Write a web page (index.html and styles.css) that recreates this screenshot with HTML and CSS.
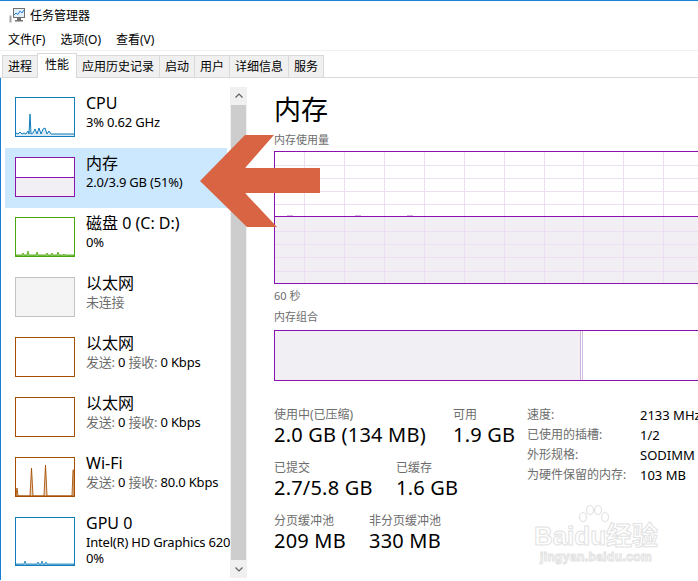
FILE: index.html
```html
<!DOCTYPE html>
<html lang="zh-CN">
<head>
    <meta charset="UTF-8">
    <meta name="viewport" content="width=device-width, initial-scale=1.0">
    <title>任务管理器</title>
    <link rel="stylesheet" href="styles.css">
</head>
<body>
<div class="window">
    <div class="titlebar">
        <svg class="app-icon" width="16" height="15" viewBox="0 0 16 15">
            <rect x="0.5" y="7.5" width="2" height="7" fill="#a0a0a0"/>
            <rect x="4.5" y="0.5" width="11" height="9" fill="#e3f1fb" stroke="#707070"/>
            <polyline points="5,7 7,5 9,6.5 11,3 13,5 15,2" fill="none" stroke="#2a7fd4"/>
            <rect x="8" y="10" width="4" height="2" fill="#707070"/>
            <rect x="6" y="12" width="8" height="1.5" fill="#707070"/>
        </svg>
        <span>任务管理器</span>
    </div>

    <div class="menubar">
        <span>文件(F)</span>
        <span>选项(O)</span>
        <span>查看(V)</span>
    </div>

    <div class="tabs">
        <div class="tab">进程</div>
        <div class="tab active">性能</div>
        <div class="tab">应用历史记录</div>
        <div class="tab">启动</div>
        <div class="tab">用户</div>
        <div class="tab">详细信息</div>
        <div class="tab">服务</div>
    </div>

    <div class="main">
        <div class="sidebar">
            <div class="list">
                <div class="item">
                    <div class="thumb cpu">
                        <svg width="58" height="38" viewBox="0 0 58 38">
                            <path d="M0 38 L0 35 L2 36 L4 34 L6 36 L8 35 L10 36 L12 33 L13 36 L14 16 L15 36 L17 35 L19 31 L21 36 L23 30 L25 36 L27 31 L29 30 L31 36 L33 33 L35 36 L58 36 L58 38 Z" fill="#d9eaf6"/>
                            <polyline points="0,35 2,36 4,34 6,36 8,35 10,36 12,33 13,36 14,16 15,36 17,35 19,31 21,36 23,30 25,36 27,31 29,30 31,36 33,33 35,36 58,36" fill="none" stroke="#117dbb"/>
                        </svg>
                    </div>
                    <div class="info">
                        <div class="name">CPU</div>
                        <div class="sub">3% 0.62 GHz</div>
                    </div>
                </div>

                <div class="item selected">
                    <div class="thumb mem">
                        <svg width="58" height="38" viewBox="0 0 58 38">
                            <rect x="0" y="19" width="58" height="19" fill="#f1eff4"/>
                            <line x1="0" y1="19.5" x2="58" y2="19.5" stroke="#8b12ae"/>
                        </svg>
                    </div>
                    <div class="info">
                        <div class="name">内存</div>
                        <div class="sub">2.0/3.9 GB (51%)</div>
                    </div>
                </div>

                <div class="item">
                    <div class="thumb disk">
                        <svg width="58" height="38" viewBox="0 0 58 38">
                            <path d="M0 38 L0 37 L6 37 L7 35 L8 37 L11 37 L12 33 L13 37 L20 37 L21 34 L22 37 L30 37 L31 35 L32 37 L35 37 L36 35 L37 37 L41 37 L42 34 L43 37 L47 37 L48 36 L49 37 L58 37 L58 38 Z" fill="#b7dc9c" stroke="#4da60c" stroke-width="0.8"/>
                        </svg>
                    </div>
                    <div class="info">
                        <div class="name">磁盘 0 (C: D:)</div>
                        <div class="sub">0%</div>
                    </div>
                </div>

                <div class="item">
                    <div class="thumb off"></div>
                    <div class="info">
                        <div class="name">以太网</div>
                        <div class="sub muted">未连接</div>
                    </div>
                </div>

                <div class="item">
                    <div class="thumb eth"></div>
                    <div class="info">
                        <div class="name">以太网</div>
                        <div class="sub"><span class="muted">发送:</span> 0 <span class="muted">接收:</span> 0 Kbps</div>
                    </div>
                </div>

                <div class="item">
                    <div class="thumb eth"></div>
                    <div class="info">
                        <div class="name">以太网</div>
                        <div class="sub"><span class="muted">发送:</span> 0 <span class="muted">接收:</span> 0 Kbps</div>
                    </div>
                </div>

                <div class="item">
                    <div class="thumb eth">
                        <svg width="58" height="38" viewBox="0 0 58 38">
                            <path d="M0 38 L1 30 L2 38 L14 38 L15.5 10 L17 38 L28 38 L29.5 7 L31 38 L56 38 L57 12 L58 12 L58 38 Z" fill="#ecd3bc" stroke="#a74f01" stroke-width="0.9"/>
                        </svg>
                    </div>
                    <div class="info">
                        <div class="name">Wi-Fi</div>
                        <div class="sub"><span class="muted">发送:</span> 0 <span class="muted">接收:</span> 80.0 Kbps</div>
                    </div>
                </div>

                <div class="item tall">
                    <div class="thumb gpu">
                        <svg width="58" height="47" viewBox="0 0 58 47">
                            <path d="M0 47 L0 46 L8 46 L9 43 L10 46 L21 46 L22 44 L23 46 L25 46 L26 43 L27 46 L29 46 L30 44 L31 46 L58 46 L58 47 Z" fill="#cfe4f2" stroke="#117dbb" stroke-width="0.8"/>
                        </svg>
                    </div>
                    <div class="info">
                        <div class="name">GPU 0</div>
                        <div class="sub">Intel(R) HD Graphics 620</div>
                        <div class="sub">0%</div>
                    </div>
                </div>
            </div>

            <div class="scrollbar">
                <div class="sb-btn">
                    <svg width="8" height="5" viewBox="0 0 8 5"><polyline points="0.5,4.5 4,1 7.5,4.5" fill="none" stroke="#606060" stroke-width="1.2"/></svg>
                </div>
                <div class="sb-thumb"></div>
                <div class="sb-btn">
                    <svg width="8" height="5" viewBox="0 0 8 5"><polyline points="0.5,0.5 4,4 7.5,0.5" fill="none" stroke="#606060" stroke-width="1.2"/></svg>
                </div>
            </div>
        </div>

        <div class="detail">
            <h1>内存</h1>
            <div class="caption cap-usage">内存使用量</div>
            <div class="chart">
                <svg width="438" height="131" viewBox="0 0 438 131">
                    <rect x="0" y="64" width="438" height="67" fill="#f1eff4"/>
                    <g stroke="#eddff2" stroke-width="1">
                        <line x1="0" y1="13.5" x2="438" y2="13.5"/>
                        <line x1="0" y1="26.5" x2="438" y2="26.5"/>
                        <line x1="0" y1="39.5" x2="438" y2="39.5"/>
                        <line x1="0" y1="52.5" x2="438" y2="52.5"/>
                        <line x1="0" y1="79.5" x2="438" y2="79.5"/>
                        <line x1="0" y1="92.5" x2="438" y2="92.5"/>
                        <line x1="0" y1="105.5" x2="438" y2="105.5"/>
                        <line x1="0" y1="119.5" x2="438" y2="119.5"/>
                        <line x1="29.5" y1="0" x2="29.5" y2="131"/>
                        <line x1="69.5" y1="0" x2="69.5" y2="131"/>
                        <line x1="109.5" y1="0" x2="109.5" y2="131"/>
                        <line x1="149.5" y1="0" x2="149.5" y2="131"/>
                        <line x1="189.5" y1="0" x2="189.5" y2="131"/>
                        <line x1="229.5" y1="0" x2="229.5" y2="131"/>
                        <line x1="269.5" y1="0" x2="269.5" y2="131"/>
                        <line x1="308.5" y1="0" x2="308.5" y2="131"/>
                        <line x1="348.5" y1="0" x2="348.5" y2="131"/>
                        <line x1="388.5" y1="0" x2="388.5" y2="131"/>
                        <line x1="428.5" y1="0" x2="428.5" y2="131"/>
                    </g>
                    <g stroke="#d7b8e2" stroke-width="1">
                        <line x1="12" y1="63.5" x2="18" y2="63.5"/>
                        <line x1="80" y1="63.5" x2="86" y2="63.5"/>
                        <line x1="132" y1="63.5" x2="138" y2="63.5"/>
                    </g>
                    <line x1="0" y1="64.5" x2="438" y2="64.5" stroke="#8b12ae"/>
                </svg>
            </div>
            <div class="caption cap-time">60 秒</div>
            <div class="caption cap-combo">内存组合</div>
            <div class="combo">
                <div class="combo-used"></div>
                <div class="combo-mod"></div>
            </div>

            <div class="stats">
                <div class="stats-left">
                    <div class="stat-row row-usage">
                        <div class="stat">
                            <div class="stat-label">使用中(已压缩)</div>
                            <div class="stat-value">2.0 GB (134 MB)</div>
                        </div>
                        <div class="stat">
                            <div class="stat-label">可用</div>
                            <div class="stat-value">1.9 GB</div>
                        </div>
                    </div>
                    <div class="stat-row row-commit">
                        <div class="stat">
                            <div class="stat-label">已提交</div>
                            <div class="stat-value">2.7/5.8 GB</div>
                        </div>
                        <div class="stat">
                            <div class="stat-label">已缓存</div>
                            <div class="stat-value">1.6 GB</div>
                        </div>
                    </div>
                    <div class="stat-row row-pool">
                        <div class="stat">
                            <div class="stat-label">分页缓冲池</div>
                            <div class="stat-value">209 MB</div>
                        </div>
                        <div class="stat">
                            <div class="stat-label">非分页缓冲池</div>
                            <div class="stat-value">330 MB</div>
                        </div>
                    </div>
                </div>

                <div class="spec">
                    <div class="spec-key">速度:</div><div class="spec-val">2133 MHz</div>
                    <div class="spec-key">已使用的插槽:</div><div class="spec-val">1/2</div>
                    <div class="spec-key">外形规格:</div><div class="spec-val">SODIMM</div>
                    <div class="spec-key">为硬件保留的内存:</div><div class="spec-val">103 MB</div>
                </div>
            </div>
        </div>
    </div>

    <!-- 标注箭头 -->
    <svg class="arrow" width="698" height="581" viewBox="0 0 698 581">
        <polygon points="200,180 245,134 274,134 245,167 320,167 320,192 245,192 277,226 247,226" fill="#d96443"/>
    </svg>

    <div class="watermark">
        <svg class="wm-paw" width="34" height="22" viewBox="0 0 34 22">
            <g fill="#fff" stroke="#e2e2e2" stroke-width="1.2">
                <ellipse cx="6" cy="13" rx="3.5" ry="4.5"/>
                <ellipse cx="13" cy="6" rx="3.5" ry="4.5"/>
                <ellipse cx="21" cy="6" rx="3.5" ry="4.5"/>
                <ellipse cx="28" cy="13" rx="3.5" ry="4.5"/>
            </g>
        </svg>
        <div class="wm-logo">Bai<span class="wm-du">du</span>经验</div>
        <div class="wm-url">jingyan.baidu.com</div>
    </div>
</div>
</body>
</html>
```

FILE: styles.css
```css
:root {
    --cpu: #117dbb;
    --mem: #8b12ae;
    --disk: #4da60c;
    --eth: #a74f01;
    --muted: #6d6d6d;
    --mem-fill: #f1eff4;
}

* {
    box-sizing: border-box;
    margin: 0;
    padding: 0;
}

body {
    width: 698px;
    height: 581px;
    overflow: hidden;
    background: #fff;
    color: #000;
    font-family: "Noto Sans", "Noto Sans CJK SC", sans-serif;
}

.window {
    position: relative;
    height: 581px;
    border-top: 1px solid #1883d7;
    overflow: hidden;
}

/* title + menu */
.titlebar {
    height: 29px;
    display: flex;
    align-items: center;
    padding-left: 9px;
    font-size: 12px;
    line-height: 16px;
}

.app-icon {
    margin-right: 5px;
}

.menubar {
    height: 20px;
    display: flex;
    gap: 15px;
    padding-left: 8px;
    font-size: 12px;
    line-height: 20px;
}

/* tabs */
.tabs {
    height: 28px;
    display: flex;
    align-items: flex-end;
    padding-left: 2px;
    border-top: 1px solid #f0f0f0;
    border-bottom: 1px solid #d9d9d9;
    font-size: 12px;
}

.tab {
    height: 22px;
    line-height: 21px;
    padding: 0 5px;
    background: #f0f0f0;
    border-top: 1px solid #d9d9d9;
    border-left: 1px solid #d9d9d9;
}

.tab:last-child {
    border-right: 1px solid #d9d9d9;
}

.tab.active {
    position: relative;
    height: 25px;
    margin-bottom: -1px;
    padding: 0 7px;
    line-height: 22px;
    background: #fff;
    border-right: 1px solid #d9d9d9;
}

.tab.active + .tab {
    margin-left: -1px;
}

/* layout */
.main {
    display: flex;
    height: 502px;
}

.sidebar {
    width: 247px;
    flex: none;
    display: flex;
    border-left: 1px solid #1a7fd4;
}

.list {
    width: 229px;
    padding-top: 10px;
}

.item {
    display: flex;
    width: 222px;
    height: 60px;
    margin-left: 4px;
    padding: 5px 0 0 10px;
}

.item.tall {
    height: 70px;
}

.item.selected {
    background: #cce8ff;
}

.thumb {
    flex: none;
    width: 60px;
    height: 40px;
    margin-top: 4px;
    border: 1px solid #ccc;
    background: #fff;
    overflow: hidden;
}

.thumb svg {
    display: block;
}

.thumb.cpu { border-color: var(--cpu); }
.thumb.mem { border-color: var(--mem); }
.thumb.disk { border-color: var(--disk); }
.thumb.eth { border-color: var(--eth); }
.thumb.gpu { border-color: var(--cpu); height: 49px; }

.thumb.off {
    border-color: #c3c3c3;
    background: #f4f4f4;
}

.info {
    margin-left: 11px;
    white-space: nowrap;
}

.name {
    font-size: 16px;
    line-height: 21px;
}

.sub {
    font-size: 13px;
    line-height: 16px;
    letter-spacing: -0.2px;
}

.muted {
    color: var(--muted);
}

/* scrollbar */
.scrollbar {
    width: 17px;
    height: 491px;
    margin-top: 9px;
    display: flex;
    flex-direction: column;
    background: #f0f0f0;
}

.sb-btn {
    height: 17px;
    display: flex;
    align-items: center;
    justify-content: center;
}

.sb-thumb {
    flex: 1;
    margin: 1px;
    background: #cdcdcd;
}

/* detail */
.detail {
    flex: 1;
    padding: 16px 0 0 27px;
    white-space: nowrap;
}

h1 {
    font-size: 27px;
    line-height: 32px;
    font-weight: normal;
}

.caption {
    font-size: 11px;
    line-height: 14px;
    color: var(--muted);
}

.cap-usage { margin-top: 7px; }
.cap-time { margin-top: 5px; }
.cap-combo { margin-top: 7px; }

.chart {
    width: 440px;
    height: 133px;
    margin-top: 4px;
    border: 1px solid var(--mem);
}

.chart svg {
    display: block;
}

.combo {
    display: flex;
    width: 440px;
    height: 51px;
    margin-top: 6px;
    border: 1px solid var(--mem);
}

.combo-used {
    width: 306px;
    background: var(--mem-fill);
    border-right: 1px solid #cfb3da;
}

.combo-mod {
    width: 1px;
    margin-left: 1px;
    background: #d6bde0;
}

/* stats */
.stats {
    display: flex;
    align-items: flex-start;
    margin-top: 26px;
}

.stats-left {
    width: 253px;
    flex: none;
}

.stat-row {
    display: flex;
}

.stat-row + .stat-row {
    margin-top: 13px;
}

.row-usage .stat:first-child { width: 179px; }
.row-commit .stat:first-child { width: 122px; }
.row-pool .stat:first-child { width: 95px; }

.stat-label {
    font-size: 12px;
    line-height: 16px;
    color: var(--muted);
}

.stat-value {
    font-size: 20px;
    line-height: 24px;
    letter-spacing: 0.2px;
}

.spec {
    display: grid;
    grid-template-columns: 113px auto;
    grid-auto-rows: 20px;
    margin-top: -2px;
    line-height: 20px;
}

.spec-key {
    font-size: 12px;
    color: var(--muted);
}

.spec-val {
    font-size: 13px;
}

/* overlays */
.arrow {
    position: absolute;
    left: 0;
    top: 0;
    pointer-events: none;
}

.watermark {
    position: absolute;
    left: 533px;
    top: 503px;
    width: 126px;
    text-align: center;
    color: #fff;
    -webkit-text-stroke: 1px #e2e2e2;
    font-family: "Liberation Sans", "Noto Sans CJK SC", sans-serif;
    font-weight: bold;
}

.wm-paw {
    display: block;
    margin: 0 0 -4px 44px;
}

.wm-logo {
    font-size: 26px;
    line-height: 28px;
}

.wm-url {
    font-size: 12px;
    line-height: 14px;
    letter-spacing: 0.4px;
}
```
